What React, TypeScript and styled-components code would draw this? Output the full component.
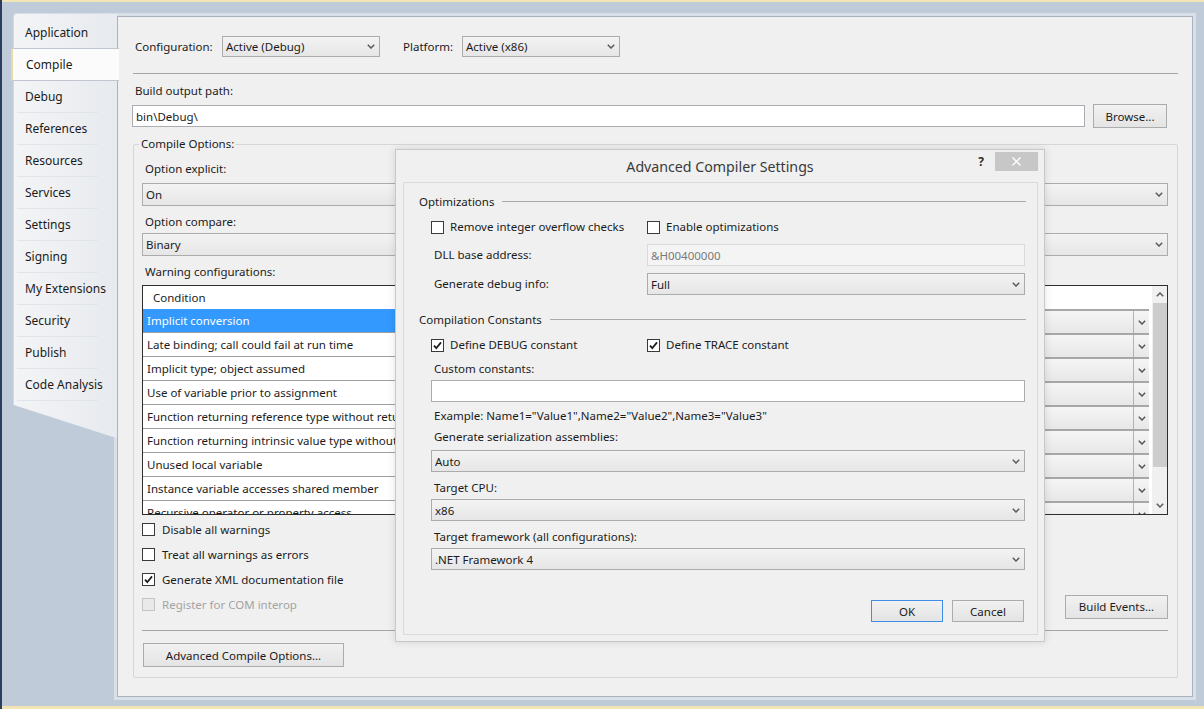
import React from "react";
import styled, { createGlobalStyle } from "styled-components";

const GlobalStyle = createGlobalStyle`
  html, body { margin: 0; padding: 0; }
  body {
    background: #bfcbd9;
    font-family: "Noto Sans", "Open Sans", sans-serif;
    font-size: 11.5px;
    color: #1b1b1b;
  }
  * { box-sizing: border-box; }
`;

const Screen = styled.div`
  position: relative;
  width: 1204px;
  height: 709px;
  overflow: hidden;
  display: flex;
  flex-direction: column;
  background: #bfcbd9;
  border-left: 2px solid #2b3e5d;
`;

const Stripe = styled.div<{ $h: number }>`
  flex: none;
  height: ${(p) => p.$h}px;
  background: #f3e4b6;
`;

const Workspace = styled.div`
  flex: 1;
  min-height: 0;
  display: flex;
  padding: 14px 11px 9px 0;
`;

/* ---------- sidebar ---------- */

const Sidebar = styled.div`
  position: relative;
  z-index: 2;
  flex: none;
  width: 115px;
  padding: 0 0 0 11px;
  margin-top: -3px;
`;

const TabList = styled.div`
  display: flex;
  flex-direction: column;
  padding-top: 3px;
  border-left: 1px solid #d2d9e1;
  border-top: 1px solid #d8dee5;
  border-top-left-radius: 4px;
  background: linear-gradient(to right, #f3f4f6, #e7eaee);
`;

const Tab = styled.div<{ $active?: boolean }>`
  height: 32px;
  line-height: 31px;
  padding-left: 11px;
  font-size: 12px;
  white-space: nowrap;
  color: #1b1b1b;
  background: ${(p) =>
    p.$active
      ? "#fbfbfb"
      : "linear-gradient(to right, transparent 3px, #e1e4e8 3px, #e1e4e8 84px, transparent 84px) bottom / 100% 1px no-repeat"};
  ${(p) =>
    p.$active &&
    `
    margin: -1px -2px 0 -3px;
    height: 33px;
    padding-left: 13px;
    border-top: 1px solid #bfc6cf;
    border-bottom: 1px solid #bfc6cf;
    border-left: 2px solid #ecd9a8;
    border-top-left-radius: 2px;
    border-bottom-left-radius: 2px;
  `}
`;

const TabFooter = styled.div`
  height: 37px;
  background: linear-gradient(to right, #f3f4f6, #e7eaee);
  border-left: 1px solid #d2d9e1;
  clip-path: polygon(0 0, 100% 0, 100% 100%, 94% 95%, 0 10%);
`;

/* ---------- main panel ---------- */

const Panel = styled.div`
  position: relative;
  z-index: 1;
  flex: 1;
  display: flex;
  flex-direction: column;
  background: #f0f0f0;
  border: 1px solid #a9b2bd;
  box-shadow: 0 0 0 3px #d9e0e8;
  padding: 19px 14px 0 14px;
`;

const Row = styled.div<{ $mt?: number }>`
  display: flex;
  align-items: center;
  margin-top: ${(p) => p.$mt ?? 0}px;
`;

const Label = styled.div<{ $mt?: number; $w?: number; $ml?: number; $pl?: number; $muted?: boolean }>`
  flex: none;
  height: 16px;
  line-height: 16px;
  white-space: nowrap;
  margin-top: ${(p) => p.$mt ?? 0}px;
  margin-left: ${(p) => p.$ml ?? 0}px;
  padding-left: ${(p) => p.$pl ?? 3}px;
  ${(p) => (p.$w ? `width: ${p.$w}px;` : "")}
  color: ${(p) => (p.$muted ? "#a3a3a3" : "#1b1b1b")};
`;

const Rule = styled.div<{ $mt?: number; $ml?: number }>`
  flex: none;
  height: 1px;
  background: #a6a6a6;
  margin-top: ${(p) => p.$mt ?? 0}px;
  margin-left: ${(p) => p.$ml ?? 0}px;
`;

const ComboBox = styled.div<{ $w?: number; $h?: number; $mt?: number }>`
  flex: ${(p) => (p.$w ? "none" : "1 0 auto")};
  ${(p) => (p.$w ? `width: ${p.$w}px;` : "")}
  height: ${(p) => p.$h ?? 22}px;
  margin-top: ${(p) => p.$mt ?? 0}px;
  display: flex;
  align-items: center;
  padding-left: 3px;
  border: 1px solid #acacac;
  background: linear-gradient(#f3f3f3, #e6e6e6);
  white-space: nowrap;
  overflow: hidden;
`;

const ComboText = styled.span`
  flex: 1;
  overflow: hidden;
`;

const ChevronBox = styled.span`
  flex: none;
  width: 17px;
  display: flex;
  align-items: center;
  justify-content: center;
`;

const TextBox = styled.div<{ $disabled?: boolean; $mt?: number }>`
  flex: 1 0 auto;
  height: 22px;
  margin-top: ${(p) => p.$mt ?? 0}px;
  display: flex;
  align-items: center;
  padding-left: 3px;
  border: 1px solid ${(p) => (p.$disabled ? "#d9d9d9" : "#abadb3")};
  background: ${(p) => (p.$disabled ? "#f4f4f4" : "#ffffff")};
  color: ${(p) => (p.$disabled ? "#7a7a7a" : "#1b1b1b")};
  white-space: nowrap;
`;

const PushButton = styled.button<{ $w: number; $h?: number; $focused?: boolean; $mt?: number }>`
  flex: none;
  width: ${(p) => p.$w}px;
  height: ${(p) => p.$h ?? 24}px;
  margin: ${(p) => p.$mt ?? 0}px 0 0 0;
  padding: 0;
  font: inherit;
  color: #1b1b1b;
  border: 1px solid ${(p) => (p.$focused ? "#3d8ee6" : "#acacac")};
  background: linear-gradient(#f1f1f1, #e4e4e4);
  border-radius: 0;
`;

const GroupBox = styled.fieldset`
  margin: 8px 0 0 1px;
  padding: 9px 9px 10px 8px;
  border: 1px solid #d6d6d6;
  border-radius: 2px;
  display: flex;
  flex-direction: column;
`;

const Legend = styled.legend`
  margin-left: -3px;
  padding: 0 2px;
  height: 16px;
  line-height: 16px;
  font-size: 11.5px;
`;

/* grid */

const Grid = styled.div`
  flex: none;
  margin-top: 5px;
  height: 230px;
  display: flex;
  border: 1px solid #2e2e2e;
  background: #ffffff;
  overflow: hidden;
`;

const GridBody = styled.div`
  flex: 1;
  display: flex;
  flex-direction: column;
  overflow: hidden;
`;

const GridHeader = styled.div`
  flex: none;
  height: 23px;
  display: flex;
  align-items: center;
  padding-left: 10px;
  background: #ffffff;
`;

const GridRow = styled.div`
  flex: none;
  height: 24px;
  display: grid;
  grid-template-columns: 560px 1fr;
`;

const ConditionCell = styled.div<{ $selected?: boolean }>`
  display: flex;
  align-items: center;
  padding-left: 4px;
  white-space: nowrap;
  overflow: hidden;
  border-bottom: 1px solid #a0a0a0;
  background: ${(p) => (p.$selected ? "#3399ff" : "#ffffff")};
  color: ${(p) => (p.$selected ? "#ffffff" : "#1b1b1b")};
`;

const NotifyCell = styled.div`
  display: flex;
  padding-right: 3px;
  background: #ffffff;
`;

const NotifyCombo = styled.div`
  flex: 1;
  display: flex;
  border-top: 2px solid #a7a7a7;
  background: linear-gradient(#f5f5f5, #e7e7e7);
`;

const NotifyText = styled.span`
  flex: 1;
  padding-left: 4px;
  line-height: 21px;
`;

const NotifyButton = styled.span`
  flex: none;
  width: 16px;
  display: flex;
  align-items: center;
  justify-content: center;
  border-left: 1px solid #b3b3b3;
`;

const ScrollBar = styled.div`
  flex: none;
  width: 15px;
  display: flex;
  flex-direction: column;
  background: #f0f0f0;
`;

const ScrollArrow = styled.div`
  flex: none;
  height: 17px;
  display: flex;
  align-items: center;
  justify-content: center;
`;

const ScrollThumb = styled.div`
  flex: none;
  height: 164px;
  margin-left: 1px;
  background: #cdcdcd;
`;

const ScrollTrack = styled.div`
  flex: 1;
`;

const CheckRow = styled.div<{ $mt?: number }>`
  flex: none;
  height: 25px;
  display: flex;
  align-items: center;
  justify-content: space-between;
  margin-top: ${(p) => p.$mt ?? 0}px;
`;

const CheckItem = styled.div<{ $gap?: number }>`
  display: flex;
  align-items: center;
  gap: ${(p) => p.$gap ?? 7}px;
  white-space: nowrap;
`;

const Box = styled.span<{ $disabled?: boolean }>`
  flex: none;
  width: 13px;
  height: 13px;
  display: flex;
  align-items: center;
  justify-content: center;
  border: 1px solid ${(p) => (p.$disabled ? "#c4c4c4" : "#3a3a3a")};
  background: ${(p) => (p.$disabled ? "#e9e9e9" : "#ffffff")};
`;

/* ---------- dialog ---------- */

const Dialog = styled.div`
  position: absolute;
  left: 393px;
  top: 149px;
  width: 650px;
  height: 493px;
  z-index: 5;
  display: flex;
  flex-direction: column;
  background: #f0f0f0;
  border: 1px solid #c8c8c8;
  box-shadow: 0 0 8px rgba(0, 0, 0, 0.12);
`;

const TitleBar = styled.div`
  flex: none;
  height: 32px;
  display: grid;
  grid-template-columns: 1fr auto 1fr;
  align-items: center;
`;

const Title = styled.div`
  font-size: 14.2px;
  color: #3a3a3a;
  white-space: nowrap;
  padding-top: 1px;
`;

const TitleControls = styled.div`
  justify-self: end;
  align-self: start;
  display: flex;
  align-items: flex-start;
  margin-top: 2px;
  margin-right: 6px;
`;

const HelpMark = styled.span`
  font-size: 12px;
  font-weight: 700;
  color: #2f2f2f;
  line-height: 16px;
  margin-right: 11px;
  margin-top: 2px;
`;

const CloseButton = styled.span`
  width: 43px;
  height: 19px;
  display: flex;
  align-items: center;
  justify-content: center;
  background: #c7c7c7;
`;

const Client = styled.div`
  flex: 1;
  margin: 0 6px 6px 7px;
  border: 1px solid #dadada;
  padding: 0 11px 0 15px;
  display: flex;
  flex-direction: column;
`;

const SectionHeader = styled.div<{ $mt: number }>`
  flex: none;
  height: 16px;
  margin-top: ${(p) => p.$mt}px;
  display: flex;
  align-items: center;
  white-space: nowrap;
`;

const SectionLine = styled.div`
  flex: 1;
  height: 1px;
  margin-left: 8px;
  background: #a9a9a9;
`;

const Indent = styled.div<{ $mt?: number }>`
  margin: ${(p) => p.$mt ?? 0}px 1px 0 12px;
  display: flex;
  flex-direction: column;
`;

const TwoCol = styled.div<{ $mt?: number; $h?: number }>`
  flex: none;
  display: grid;
  grid-template-columns: 216px 1fr;
  align-items: center;
  height: ${(p) => p.$h ?? 22}px;
  margin: ${(p) => p.$mt ?? 0}px 1px 0 12px;
`;

const ButtonRow = styled.div`
  display: flex;
  justify-content: flex-end;
  gap: 9px;
  margin: 30px 2px 0 0;
`;

/* ---------- icons ---------- */

const ChevronDown = ({ color = "#5a5a5a" }: { color?: string }) => (
  <svg width="8" height="5" viewBox="0 0 8 5">
    <path d="M0.8 0.8 L4 4 L7.2 0.8" fill="none" stroke={color} strokeWidth="1.5" />
  </svg>
);

const ChevronUp = () => (
  <svg width="8" height="5" viewBox="0 0 8 5">
    <path d="M0.8 4.2 L4 1 L7.2 4.2" fill="none" stroke="#5a5a5a" strokeWidth="1.5" />
  </svg>
);

const CheckMark = () => (
  <svg width="11" height="11" viewBox="0 0 11 11">
    <path d="M2 5.6 L4.3 8.2 L9 2.4" fill="none" stroke="#1e1e1e" strokeWidth="1.8" />
  </svg>
);

const CloseGlyph = () => (
  <svg width="9" height="9" viewBox="0 0 9 9">
    <path d="M0.5 0.5 L8.5 8.5 M8.5 0.5 L0.5 8.5" stroke="#ffffff" strokeWidth="1.3" />
  </svg>
);

const Combo = ({ text, w, h, mt }: { text: string; w?: number; h?: number; mt?: number }) => (
  <ComboBox $w={w} $h={h} $mt={mt}>
    <ComboText>{text}</ComboText>
    <ChevronBox>
      <ChevronDown />
    </ChevronBox>
  </ComboBox>
);

const Check = ({
  label,
  checked,
  disabled,
  gap,
}: {
  label: string;
  checked?: boolean;
  disabled?: boolean;
  gap?: number;
}) => (
  <CheckItem $gap={gap}>
    <Box $disabled={disabled}>{checked && <CheckMark />}</Box>
    <Label $pl={0} $muted={disabled}>
      {label}
    </Label>
  </CheckItem>
);

/* ---------- data ---------- */

const tabs = [
  "Application",
  "Compile",
  "Debug",
  "References",
  "Resources",
  "Services",
  "Settings",
  "Signing",
  "My Extensions",
  "Security",
  "Publish",
  "Code Analysis",
];

const warnings: [string, string][] = [
  ["Implicit conversion", "Warning"],
  ["Late binding; call could fail at run time", "Warning"],
  ["Implicit type; object assumed", "Warning"],
  ["Use of variable prior to assignment", "Warning"],
  ["Function returning reference type without return value", "Warning"],
  ["Function returning intrinsic value type without return value", "Warning"],
  ["Unused local variable", "Warning"],
  ["Instance variable accesses shared member", "Warning"],
  ["Recursive operator or property access", "Warning"],
  ["Duplicate or overlapping catch blocks", "Warning"],
];

export default function App() {
  return (
    <>
      <GlobalStyle />
      <Screen>
        <Stripe $h={2} />
        <Workspace>
          <Sidebar>
            <TabList>
              {tabs.map((t) => (
                <Tab key={t} $active={t === "Compile"}>
                  {t}
                </Tab>
              ))}
            </TabList>
            <TabFooter />
          </Sidebar>

          <Panel>
            <Row>
              <Label $w={90}>Configuration:</Label>
              <Combo text="Active (Debug)" w={158} h={21} />
              <Label $ml={23} $w={59} $pl={0}>
                Platform:
              </Label>
              <Combo text="Active (x86)" w={158} h={21} />
            </Row>
            <Rule $mt={16} $ml={1} />
            <Label $mt={9}>Build output path:</Label>
            <Row $mt={5}>
              <TextBox>bin\Debug\</TextBox>
              <PushButton $w={74} style={{ marginLeft: 8, marginRight: 11 }}>
                Browse...
              </PushButton>
            </Row>

            <GroupBox>
              <Legend>Compile Options:</Legend>
              <Label>Option explicit:</Label>
              <Combo text="On" h={23} mt={6} />
              <Label $mt={8}>Option compare:</Label>
              <Combo text="Binary" h={23} mt={3} />
              <Label $mt={8}>Warning configurations:</Label>
              <Grid>
                <GridBody>
                  <GridHeader>Condition</GridHeader>
                  {warnings.map(([c, n], i) => (
                    <GridRow key={c}>
                      <ConditionCell $selected={i === 0}>{c}</ConditionCell>
                      <NotifyCell>
                        <NotifyCombo>
                          <NotifyText>{n}</NotifyText>
                          <NotifyButton>
                            <ChevronDown color="#555" />
                          </NotifyButton>
                        </NotifyCombo>
                      </NotifyCell>
                    </GridRow>
                  ))}
                </GridBody>
                <ScrollBar>
                  <ScrollArrow>
                    <ChevronUp />
                  </ScrollArrow>
                  <ScrollThumb />
                  <ScrollTrack />
                  <ScrollArrow>
                    <ChevronDown />
                  </ScrollArrow>
                </ScrollBar>
              </Grid>

              <CheckRow $mt={2}>
                <Check label="Disable all warnings" />
              </CheckRow>
              <CheckRow>
                <Check label="Treat all warnings as errors" />
              </CheckRow>
              <CheckRow>
                <Check label="Generate XML documentation file" checked />
              </CheckRow>
              <CheckRow>
                <Check label="Register for COM interop" disabled />
                <PushButton $w={103} $mt={4}>
                  Build Events...
                </PushButton>
              </CheckRow>
              <Rule $mt={13} />
              <PushButton $w={201} $mt={12} style={{ marginLeft: 1 }}>
                Advanced Compile Options...
              </PushButton>
            </GroupBox>
          </Panel>
        </Workspace>
        <Stripe $h={3} />

        <Dialog>
          <TitleBar>
            <span />
            <Title>Advanced Compiler Settings</Title>
            <TitleControls>
              <HelpMark>?</HelpMark>
              <CloseButton>
                <CloseGlyph />
              </CloseButton>
            </TitleControls>
          </TitleBar>
          <Client>
            <SectionHeader $mt={10}>
              Optimizations
              <SectionLine />
            </SectionHeader>
            <TwoCol $mt={10} $h={16}>
              <Check label="Remove integer overflow checks" gap={6} />
              <Check label="Enable optimizations" gap={6} />
            </TwoCol>
            <TwoCol $mt={9}>
              <Label>DLL base address:</Label>
              <TextBox $disabled>&amp;H00400000</TextBox>
            </TwoCol>
            <TwoCol $mt={7}>
              <Label>Generate debug info:</Label>
              <Combo text="Full" />
            </TwoCol>

            <SectionHeader $mt={16}>
              Compilation Constants
              <SectionLine />
            </SectionHeader>
            <TwoCol $mt={10} $h={16}>
              <Check label="Define DEBUG constant" checked gap={6} />
              <Check label="Define TRACE constant" checked gap={6} />
            </TwoCol>
            <Indent $mt={8}>
              <Label>Custom constants:</Label>
              <TextBox $mt={3} />
              <Label $mt={6}>Example: Name1="Value1",Name2="Value2",Name3="Value3"</Label>
              <Label $mt={5}>Generate serialization assemblies:</Label>
              <Combo text="Auto" mt={5} />
              <Label $mt={8}>Target CPU:</Label>
              <Combo text="x86" mt={3} />
              <Label $mt={8}>Target framework (all configurations):</Label>
              <Combo text=".NET Framework 4" mt={3} />
            </Indent>
            <ButtonRow>
              <PushButton $w={72} $h={22} $focused>
                OK
              </PushButton>
              <PushButton $w={72} $h={22}>
                Cancel
              </PushButton>
            </ButtonRow>
          </Client>
        </Dialog>
      </Screen>
    </>
  );
}
